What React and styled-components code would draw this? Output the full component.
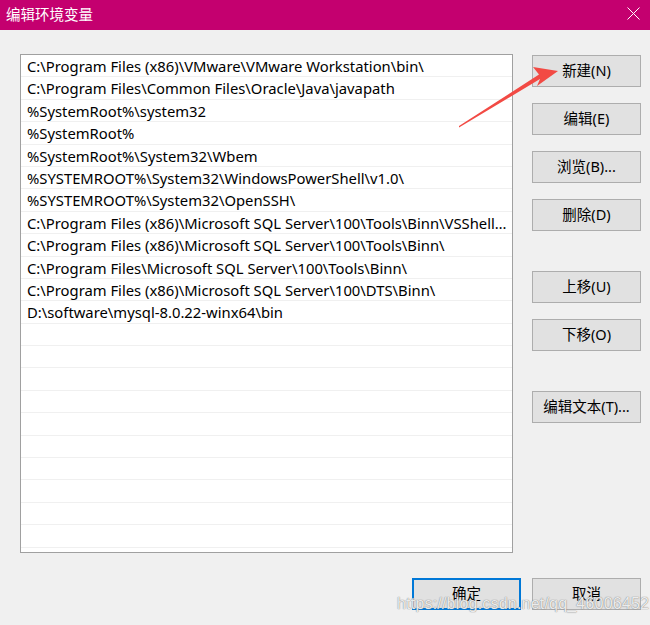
import React from 'react';
import styled, { createGlobalStyle } from 'styled-components';

const GlobalStyle = createGlobalStyle`
  html, body {
    margin: 0;
    padding: 0;
    background: #f0f0f0;
  }
  * { box-sizing: border-box; }
`;

const FONT = `"Noto Sans", "Noto Sans CJK SC", sans-serif`;

const paths = [
  'C:\\Program Files (x86)\\VMware\\VMware Workstation\\bin\\',
  'C:\\Program Files\\Common Files\\Oracle\\Java\\javapath',
  '%SystemRoot%\\system32',
  '%SystemRoot%',
  '%SystemRoot%\\System32\\Wbem',
  '%SYSTEMROOT%\\System32\\WindowsPowerShell\\v1.0\\',
  '%SYSTEMROOT%\\System32\\OpenSSH\\',
  'C:\\Program Files (x86)\\Microsoft SQL Server\\100\\Tools\\Binn\\VSShell\\Common7\\IDE\\',
  'C:\\Program Files (x86)\\Microsoft SQL Server\\100\\Tools\\Binn\\',
  'C:\\Program Files\\Microsoft SQL Server\\100\\Tools\\Binn\\',
  'C:\\Program Files (x86)\\Microsoft SQL Server\\100\\DTS\\Binn\\',
  'D:\\software\\mysql-8.0.22-winx64\\bin',
];

const EMPTY_ROWS = 11;

const sideButtons = [
  { label: '新建(N)' },
  { label: '编辑(E)' },
  { label: '浏览(B)...' },
  { label: '删除(D)' },
  { label: '上移(U)', spaced: true },
  { label: '下移(O)' },
  { label: '编辑文本(T)...', spaced: true },
];

const Dialog = styled.div`
  position: relative;
  width: 650px;
  height: 625px;
  background: #f0f0f0;
  font-family: ${FONT};
  overflow: hidden;
`;

const TitleBar = styled.div`
  height: 30px;
  background: #c4006f;
  display: flex;
  align-items: center;
  justify-content: space-between;
  padding: 0 5px 3px 6px;
`;

const Title = styled.span`
  color: #fff;
  font-size: 14.5px;
  font-family: "Noto Sans CJK SC", sans-serif;
`;

const CloseButton = styled.div`
  width: 14px;
  height: 14px;
  display: flex;
  align-items: center;
  justify-content: center;
  margin-right: 5px;
`;

const Body = styled.div`
  display: flex;
  padding: 24px 0 0 20px;
`;

const ListBox = styled.div`
  width: 493px;
  height: 499px;
  background: #fff;
  border: 1px solid #a0a0a0;
  overflow: hidden;
`;

const Row = styled.div`
  height: 22.4px;
  padding: 0 1px 0 6px;
  border-bottom: 1px solid #f0f0f0;
  font-size: 14.8px;
  line-height: 22px;
  color: #000;
  white-space: nowrap;
  overflow: hidden;
  text-overflow: ellipsis;
`;

const SideColumn = styled.div`
  display: flex;
  flex-direction: column;
  gap: 16px;
  margin-left: 19px;
  padding-top: 1px;
`;

const Button = styled.button`
  width: 109px;
  height: 32px;
  margin-top: ${(p) => (p.$spaced ? '24px' : '0')};
  background: #e1e1e1;
  border: ${(p) => (p.$primary ? '2px solid #0078d7' : '1px solid #adadad')};
  font-family: ${FONT};
  font-size: 14.5px;
  color: #000;
  padding: 0 0 4px;
  display: flex;
  align-items: center;
  justify-content: center;
`;

const Footer = styled.div`
  display: flex;
  justify-content: flex-end;
  gap: 11px;
  padding: 25px 9px 0 0;
`;

const Watermark = styled.div`
  position: absolute;
  left: 397px;
  top: 595px;
  font-family: "Liberation Sans", Arial, sans-serif;
  font-size: 16px;
  color: rgba(255, 255, 255, 0.85);
  text-shadow: 0 0 1px rgba(120, 120, 120, 0.9), 0 0 1px rgba(120, 120, 120, 0.6);
  letter-spacing: 0.2px;
  pointer-events: none;
`;

const ArrowLayer = styled.svg`
  position: absolute;
  left: 0;
  top: 0;
  pointer-events: none;
`;

export default function App() {
  return (
    <Dialog>
      <GlobalStyle />
      <TitleBar>
        <Title>编辑环境变量</Title>
        <CloseButton>
          <svg width="13" height="13" viewBox="0 0 13 13">
            <path d="M0.5 0.5 L12.5 12.5 M12.5 0.5 L0.5 12.5" stroke="#fff" strokeWidth="1" fill="none" />
          </svg>
        </CloseButton>
      </TitleBar>
      <Body>
        <ListBox>
          {paths.map((p) => (
            <Row key={p}>{p}</Row>
          ))}
          {Array.from({ length: EMPTY_ROWS }).map((_, i) => (
            <Row key={`empty-${i}`} />
          ))}
        </ListBox>
        <SideColumn>
          {sideButtons.map((b) => (
            <Button key={b.label} $spaced={b.spaced}>
              {b.label}
            </Button>
          ))}
        </SideColumn>
      </Body>
      <Footer>
        <Button $primary>确定</Button>
        <Button>取消</Button>
      </Footer>
      <ArrowLayer width="650" height="625" viewBox="0 0 650 625">
        <path
          d="M459 127.5 L540 79 L537 86 L558 71 L533 67 L539 74.5 L459 126 Z"
          fill="#f24a44"
        />
      </ArrowLayer>
      <Watermark>https://blog.csdn.net/qq_46006452</Watermark>
    </Dialog>
  );
}
